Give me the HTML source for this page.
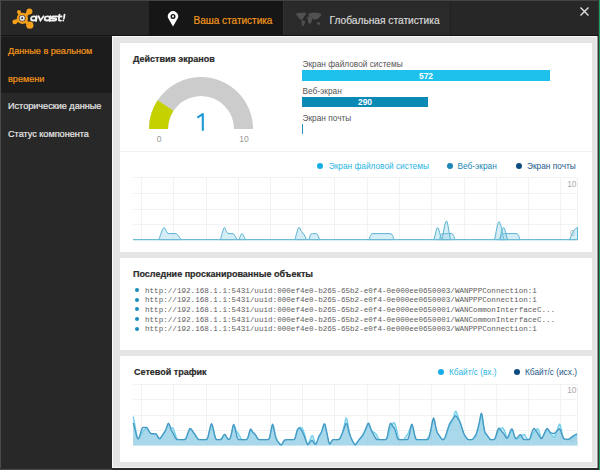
<!DOCTYPE html>
<html><head><meta charset="utf-8">
<style>
html,body{margin:0;padding:0;}
body{width:600px;height:470px;overflow:hidden;position:relative;background:#282828;font-family:"Liberation Sans",sans-serif;}
.a{position:absolute;white-space:nowrap;}
.t{position:absolute;white-space:nowrap;line-height:1;}
.mono{font-family:"Liberation Mono",monospace;}
.w{-webkit-text-stroke:0.2px currentColor;}
</style></head><body>
<div class="a" style="left:0;top:0;width:600px;height:36px;background:#272727"></div>
<div class="a" style="left:149px;top:1px;width:134px;height:34px;background:#161616"></div>
<div class="a" style="left:283px;top:1px;width:1px;height:34px;background:#303030"></div>
<div class="a" style="left:284px;top:1px;width:166px;height:34px;background:#2a2a2a"></div>
<div class="a" style="left:450px;top:1px;width:1px;height:34px;background:#202020"></div>
<div class="a" style="left:0;top:35px;width:600px;height:1px;background:#121212"></div>
<div class="a" style="left:0;top:37px;width:112px;height:56px;background:#1c1c1c"></div>
<div class="t w" style="left:8px;top:47px;font-size:9.1px;color:#f3961a">Данные в реальном</div>
<div class="t w" style="left:8px;top:74.5px;font-size:9.1px;color:#f3961a">времени</div>
<div class="t w" style="left:8px;top:102px;font-size:9.1px;color:#e8e8e8">Исторические данные</div>
<div class="t w" style="left:8px;top:129.5px;font-size:9.1px;color:#e8e8e8">Статус компонента</div>
<div class="t w" style="left:193.5px;top:15.5px;font-size:10px;color:#f3961a">Ваша статистика</div>
<div class="t w" style="left:329.5px;top:15.5px;font-size:10.2px;color:#d8d8d8">Глобальная статистика</div>

<div class="a" style="left:112px;top:36px;width:486px;height:432px;background:#e5e5e5"></div>
<div class="a" style="left:112px;top:36px;width:486px;height:1px;background:#fafafa"></div>
<div class="a" style="left:112px;top:36px;width:1px;height:432px;background:#fafafa"></div>
<div class="a" style="left:120px;top:43px;width:472px;height:209px;background:#fff"></div>
<div class="a" style="left:120px;top:258px;width:472px;height:92px;background:#fff"></div>
<div class="a" style="left:120px;top:356px;width:472px;height:106px;background:#fff"></div>
<div class="a" style="left:120px;top:151px;width:472px;height:1px;background:#f0f0f0"></div>
<div class="a" style="left:0;top:0;width:600px;height:1px;background:#444"></div>
<div class="a" style="left:0;top:0;width:1px;height:470px;background:#4a4a4a"></div>
<div class="a" style="left:112px;top:467px;width:486px;height:1px;background:#f4f4f4"></div>
<div class="a" style="left:596px;top:36px;width:1px;height:432px;background:#eef0f0"></div>
<div class="a" style="left:597px;top:36px;width:1px;height:432px;background:#9a9494"></div>
<div class="a" style="left:0;top:468px;width:598px;height:2px;background:#2a2a2a"></div>
<div class="a" style="left:0;top:469px;width:112px;height:1px;background:#4a4a4a"></div>
<div class="a" style="left:598px;top:0;width:1px;height:470px;background:#3a3333"></div>
<div class="a" style="left:599px;top:0;width:1px;height:470px;background:#14a060"></div>

<div class="t w" style="left:133px;top:55px;font-size:9px;font-weight:bold;color:#2a2a2a">Действия экранов</div>
<div class="t" style="left:302.5px;top:60px;font-size:8.3px;color:#555">Экран файловой системы</div>
<div class="t" style="left:302.5px;top:87px;font-size:8.3px;color:#555">Веб-экран</div>
<div class="t" style="left:302.5px;top:114px;font-size:8.3px;color:#555">Экран почты</div>
<div class="a" style="left:302px;top:70px;width:248px;height:10.5px;background:#1ec0ec"></div>
<div class="a" style="left:302px;top:97px;width:126px;height:10px;background:#0a8ab4"></div>
<div class="a" style="left:302px;top:123.5px;width:1px;height:10px;background:#2a8fc0"></div>
<div class="t" style="left:302px;width:248px;text-align:center;top:71.5px;font-size:8.5px;font-weight:bold;color:#fff">572</div>
<div class="t" style="left:302px;width:126px;text-align:center;top:98px;font-size:8.5px;font-weight:bold;color:#fff">290</div>
<div class="t" style="left:154px;width:10px;text-align:center;top:135px;font-size:8.5px;color:#999">0</div>
<div class="t" style="left:234px;width:20px;text-align:center;top:135px;font-size:8.5px;color:#999">10</div>

<div class="a" style="left:317px;top:162.75px;width:6px;height:6px;border-radius:50%;background:#18ade6"></div>
<div class="t" style="left:328.75px;top:162px;font-size:8.3px;color:#2ab5e2">Экран файловой системы</div>
<div class="a" style="left:446.5px;top:162.75px;width:6px;height:6px;border-radius:50%;background:#1a88b6"></div>
<div class="t" style="left:457.5px;top:162px;font-size:8.3px;color:#1a86b2">Веб-экран</div>
<div class="a" style="left:515.75px;top:162.75px;width:6px;height:6px;border-radius:50%;background:#0b4b80"></div>
<div class="t" style="left:527px;top:162px;font-size:8.3px;color:#22578a">Экран почты</div>
<div class="t" style="left:556.5px;width:20px;text-align:right;top:180px;font-size:8.4px;color:#aaa">10</div>

<div class="t" style="left:570px;top:229px;font-size:8.4px;color:#b5b5b5">0</div>
<div class="t" style="left:570px;top:435px;font-size:8.4px;color:#b5b5b5">0</div>
<div class="t w" style="left:133px;top:270px;font-size:9px;font-weight:bold;color:#2a2a2a">Последние просканированные объекты</div>
<div class="a" style="left:134.5px;top:288px;width:4px;height:4px;border-radius:50%;background:#1b8cc0"></div>
<div class="a" style="left:134.5px;top:297.7px;width:4px;height:4px;border-radius:50%;background:#1b8cc0"></div>
<div class="a" style="left:134.5px;top:307.4px;width:4px;height:4px;border-radius:50%;background:#1b8cc0"></div>
<div class="a" style="left:134.5px;top:317.1px;width:4px;height:4px;border-radius:50%;background:#1b8cc0"></div>
<div class="a" style="left:134.5px;top:326.8px;width:4px;height:4px;border-radius:50%;background:#1b8cc0"></div>
<div class="a mono" style="left:145px;top:286.5px;font-size:7.6px;line-height:9.7px;color:#606060">http://192.168.1.1:5431/uuid:000ef4e0-b265-65b2-e0f4-0e000ee0650003/WANPPPConnection:1<br>http://192.168.1.1:5431/uuid:000ef4e0-b265-65b2-e0f4-0e000ee0650003/WANPPPConnection:1<br>http://192.168.1.1:5431/uuid:000ef4e0-b265-65b2-e0f4-0e000ee0650001/WANCommonInterfaceC...<br>http://192.168.1.1:5431/uuid:000ef4e0-b265-65b2-e0f4-0e000ee0650001/WANCommonInterfaceC...<br>http://192.168.1.1:5431/uuid:000ef4e0-b265-65b2-e0f4-0e000ee0650003/WANPPPConnection:1</div>

<div class="t w" style="left:134px;top:368px;font-size:9px;font-weight:bold;color:#2a2a2a">Сетевой трафик</div>
<div class="a" style="left:437.5px;top:368.5px;width:6px;height:6px;border-radius:50%;background:#18ade6"></div>
<div class="t" style="left:449px;top:368px;font-size:8.3px;color:#2ab5e2">Кбайт/с (вх.)</div>
<div class="a" style="left:513.5px;top:368.5px;width:6px;height:6px;border-radius:50%;background:#0b4b80"></div>
<div class="t" style="left:525px;top:368px;font-size:8.3px;color:#22578a">Кбайт/с (исх.)</div>
<div class="t" style="left:556.5px;width:20px;text-align:right;top:386px;font-size:8.4px;color:#aaa">10</div>

<svg class="a" style="left:0;top:0" width="600" height="470" viewBox="0 0 600 470">
<g fill="#f5a01a">
<path d="M22.5,18.5 L18.9,11.9 M22.5,18.5 L29.4,11.6 M22.5,18.5 L14.8,21.8 M22.5,18.5 L29.6,25.1" stroke="#f5a01a" stroke-width="3.2"/>
<circle cx="22.4" cy="18.4" r="5.6"/>
<circle cx="18.9" cy="11.9" r="1.9"/>
<circle cx="29.4" cy="11.4" r="3"/>
<circle cx="14.8" cy="21.9" r="2.4"/>
<circle cx="29.8" cy="25.2" r="3.6"/>
</g>
<circle cx="22.2" cy="18.2" r="3.3" fill="#4a3420"/>
<circle cx="22.2" cy="18.2" r="2.6" fill="#dfe4ea"/>
<circle cx="22.2" cy="18.2" r="0.9" fill="#222"/>
<g fill="none" stroke="#f2f2f2" stroke-width="1.8" stroke-linecap="round" transform="translate(0,21) skewX(-8) translate(0,-21)">
<ellipse cx="33.3" cy="18.45" rx="2.55" ry="2.05"/>
<path d="M36.1,16.2 V21"/>
<path d="M37.9,16.3 L40.4,20.5 L42.9,16.3"/>
<ellipse cx="46.9" cy="18.45" rx="2.55" ry="2.05"/>
<path d="M49.7,16.2 V21"/>
<path d="M56,16.4 H52.4 Q51.1,16.4 51.1,17.5 Q51.1,18.5 52.4,18.5 H54.8 Q56.1,18.5 56.1,19.6 Q56.1,20.6 54.8,20.6 H51"/>
<path d="M58.6,14.6 V19.4 Q58.6,20.6 59.8,20.6 H61"/>
<path d="M57.3,16.5 H61"/>
<path d="M63.6,14.6 V18.6"/>
</g>
<circle cx="63.3" cy="20.5" r="0.9" fill="#f2f2f2"/>
<g fill="#515151" stroke="#515151" stroke-width="1.2" stroke-linejoin="round">
<path d="M296.5,14 L299.5,13.3 L302.5,13.6 L304.5,12.8 L305.5,13.8 L304,15.6 L303,17.6 L301.8,19 L300.5,19.2 L299.2,17.6 L298,16 Z"/>
<path d="M302,21 L303.8,21.2 L304.6,22.2 L303.6,24.3 L302.6,25.5 L302.3,23.5 Z"/>
<path d="M309,14 L312,13.4 L316,13.3 L319.5,13.8 L320.8,14.8 L319.2,16.5 L317.6,18.3 L315.8,19 L313.2,18.6 L311.8,17 L309.6,16.3 Z"/>
<path d="M307.8,17.3 L310.4,17 L311.6,18.8 L311.2,21.3 L309.9,23.3 L309,22.8 L308.4,20.3 Z"/>
<path d="M317.5,23 L319.4,22.9 L319.7,24 L317.8,24.1 Z"/>
</g>
<path d="M149,129 A52,52 0 0 1 253,129 L234,129 A33,33 0 0 0 168,129 Z" fill="#cccccc"/><path d="M149,129 A52,52 0 0 1 157.64,100.30 L173.48,110.79 A33,33 0 0 0 168,129 Z" fill="#c5d200"/><path d="M202.8,113.2 V130.7 M203.2,113.8 L197.3,117.6" stroke="#1e9bd7" stroke-width="2.1" fill="none"/>
<g stroke="#f2f2f2" stroke-width="1"><line x1="133" y1="177.5" x2="577.5" y2="177.5"/><line x1="133" y1="193.5" x2="577.5" y2="193.5"/><line x1="133" y1="209.5" x2="577.5" y2="209.5"/><line x1="133" y1="224.5" x2="577.5" y2="224.5"/><line x1="141.5" y1="177" x2="141.5" y2="239.6"/><line x1="173.5" y1="177" x2="173.5" y2="239.6"/><line x1="206.5" y1="177" x2="206.5" y2="239.6"/><line x1="238.5" y1="177" x2="238.5" y2="239.6"/><line x1="270.5" y1="177" x2="270.5" y2="239.6"/><line x1="302.5" y1="177" x2="302.5" y2="239.6"/><line x1="334.5" y1="177" x2="334.5" y2="239.6"/><line x1="367.5" y1="177" x2="367.5" y2="239.6"/><line x1="399.5" y1="177" x2="399.5" y2="239.6"/><line x1="431.5" y1="177" x2="431.5" y2="239.6"/><line x1="464.5" y1="177" x2="464.5" y2="239.6"/><line x1="496.5" y1="177" x2="496.5" y2="239.6"/><line x1="528.5" y1="177" x2="528.5" y2="239.6"/><line x1="560.5" y1="177" x2="560.5" y2="239.6"/><line x1="577.5" y1="177" x2="577.5" y2="239.6"/></g>
<path d="M159.00,239.60 C159.83,237.07 160.67,233.95 161.50,232.00 C162.47,229.74 163.43,227.60 164.40,227.60 C165.27,227.60 166.13,231.55 167.00,232.50 C167.67,233.23 168.33,233.60 169.00,233.60 C171.33,233.60 173.67,233.60 176.00,233.60 C176.83,233.60 177.67,235.00 178.50,236.00 C179.33,237.00 180.17,238.40 181.00,239.60 Z" fill="rgba(150,210,230,0.4)" stroke="#5ab4d2" stroke-width="1"/><path d="M220.50,239.60 C221.17,237.07 221.83,234.03 222.50,232.00 C223.13,230.08 223.77,227.60 224.40,227.60 C225.27,227.60 226.13,231.55 227.00,232.50 C227.67,233.23 228.33,233.60 229.00,233.60 C230.33,233.60 231.67,233.60 233.00,233.60 C233.67,233.60 234.33,235.00 235.00,236.00 C235.67,237.00 236.33,238.40 237.00,239.60 Z" fill="rgba(150,210,230,0.4)" stroke="#5ab4d2" stroke-width="1"/><path d="M239.00,239.60 C240.00,237.60 241.00,233.60 242.00,233.60 C243.17,233.60 244.33,237.60 245.50,239.60 Z" fill="rgba(150,210,230,0.4)" stroke="#5ab4d2" stroke-width="1"/><path d="M295.00,239.60 C295.67,237.07 296.33,234.03 297.00,232.00 C297.67,229.97 298.33,227.40 299.00,227.40 C299.83,227.40 300.67,230.32 301.50,231.50 C302.33,232.68 303.17,233.15 304.00,234.50 C304.83,235.85 305.67,237.90 306.50,239.60 Z" fill="rgba(150,210,230,0.4)" stroke="#5ab4d2" stroke-width="1"/><path d="M309.00,239.60 C309.67,237.73 310.33,234.36 311.00,234.00 C311.50,233.73 312.00,233.60 312.50,233.60 C313.50,233.60 314.50,233.60 315.50,233.60 C316.00,233.60 316.50,233.73 317.00,234.00 C317.83,234.44 318.67,237.73 319.50,239.60 Z" fill="rgba(150,210,230,0.4)" stroke="#5ab4d2" stroke-width="1"/><path d="M369.00,239.60 C369.67,237.90 370.33,235.10 371.00,234.50 C371.67,233.90 372.33,233.60 373.00,233.60 C378.67,233.60 384.33,233.60 390.00,233.60 C390.67,233.60 391.33,233.90 392.00,234.50 C392.67,235.10 393.33,237.90 394.00,239.60 Z" fill="rgba(150,210,230,0.4)" stroke="#5ab4d2" stroke-width="1"/><path d="M439.50,239.60 C440.00,237.90 440.50,234.95 441.00,234.50 C441.67,233.90 442.33,233.60 443.00,233.60 C445.67,233.60 448.33,233.60 451.00,233.60 C451.67,233.60 452.33,233.90 453.00,234.50 C453.67,235.10 454.33,237.90 455.00,239.60 Z" fill="rgba(150,210,230,0.4)" stroke="#5ab4d2" stroke-width="1"/><path d="M434.00,239.60 C435.20,235.60 436.40,227.60 437.60,227.60 C438.90,227.60 440.20,235.60 441.50,239.60 Z" fill="rgba(150,210,230,0.4)" stroke="#5ab4d2" stroke-width="1"/><path d="M442.00,239.60 C443.47,233.40 444.93,221.00 446.40,221.00 C447.77,221.00 449.13,233.40 450.50,239.60 Z" fill="rgba(150,210,230,0.4)" stroke="#5ab4d2" stroke-width="1"/><path d="M500.00,239.60 C500.67,237.90 501.33,235.10 502.00,234.50 C502.67,233.90 503.33,233.60 504.00,233.60 C508.00,233.60 512.00,233.60 516.00,233.60 C516.67,233.60 517.33,233.90 518.00,234.50 C518.67,235.10 519.33,237.90 520.00,239.60 Z" fill="rgba(150,210,230,0.4)" stroke="#5ab4d2" stroke-width="1"/><path d="M494.50,239.60 C496.00,233.60 497.50,221.60 499.00,221.60 C500.67,221.60 502.33,233.60 504.00,239.60 Z" fill="rgba(150,210,230,0.4)" stroke="#5ab4d2" stroke-width="1"/><path d="M499.50,239.60 C500.87,235.60 502.23,227.60 503.60,227.60 C504.90,227.60 506.20,235.60 507.50,239.60 Z" fill="rgba(150,210,230,0.4)" stroke="#5ab4d2" stroke-width="1"/><path d="M569.50,239.60 C570.33,237.73 571.17,235.63 572.00,234.00 C573.17,231.71 574.33,229.50 575.50,228.50 C576.17,227.93 576.83,227.90 577.50,227.60 L577.5,239.6 Z" fill="rgba(150,210,230,0.4)" stroke="#5ab4d2" stroke-width="1"/>
<line x1="133" y1="239.6" x2="577.5" y2="239.6" stroke="#6cbad6" stroke-width="1.3"/>
<g stroke="#f2f2f2" stroke-width="1"><line x1="133" y1="384.5" x2="577.5" y2="384.5"/><line x1="133" y1="399.5" x2="577.5" y2="399.5"/><line x1="133" y1="415.5" x2="577.5" y2="415.5"/><line x1="133" y1="430.5" x2="577.5" y2="430.5"/><line x1="141.5" y1="384" x2="141.5" y2="445.6"/><line x1="173.5" y1="384" x2="173.5" y2="445.6"/><line x1="206.5" y1="384" x2="206.5" y2="445.6"/><line x1="238.5" y1="384" x2="238.5" y2="445.6"/><line x1="270.5" y1="384" x2="270.5" y2="445.6"/><line x1="302.5" y1="384" x2="302.5" y2="445.6"/><line x1="334.5" y1="384" x2="334.5" y2="445.6"/><line x1="367.5" y1="384" x2="367.5" y2="445.6"/><line x1="399.5" y1="384" x2="399.5" y2="445.6"/><line x1="431.5" y1="384" x2="431.5" y2="445.6"/><line x1="464.5" y1="384" x2="464.5" y2="445.6"/><line x1="496.5" y1="384" x2="496.5" y2="445.6"/><line x1="528.5" y1="384" x2="528.5" y2="445.6"/><line x1="560.5" y1="384" x2="560.5" y2="445.6"/><line x1="577.5" y1="384" x2="577.5" y2="445.6"/></g>
<path d="M133.1,416.5 L133.6,418.3 L134.1,420.7 L134.6,423.3 L135.1,426.1 L135.6,428.9 L136.1,431.6 L136.6,434.2 L137.1,436.5 L137.6,438.1 L138.1,438.8 L138.6,438.7 L139.1,438.1 L139.6,437.1 L140.1,436.1 L140.6,435.2 L141.1,434.5 L141.6,433.7 L142.1,433.0 L142.6,432.3 L143.1,431.6 L143.6,430.9 L144.1,430.2 L144.6,429.5 L145.1,428.8 L145.6,428.3 L146.1,427.9 L146.6,427.8 L147.1,428.1 L147.6,428.8 L148.1,429.6 L148.6,430.5 L149.1,431.4 L149.6,432.2 L150.1,432.9 L150.6,433.4 L151.1,433.6 L151.6,433.7 L152.1,433.7 L152.6,433.7 L153.1,433.7 L153.6,433.7 L154.1,433.7 L154.6,433.8 L155.1,433.8 L155.6,433.9 L156.1,434.1 L156.6,434.7 L157.1,435.4 L157.6,436.3 L158.1,437.2 L158.6,438.0 L159.1,438.6 L159.6,438.8 L160.1,438.6 L160.6,438.2 L161.1,437.6 L161.6,437.0 L162.1,436.4 L162.6,435.7 L163.1,435.0 L163.6,434.2 L164.1,433.4 L164.6,432.6 L165.1,431.7 L165.6,430.7 L166.1,429.5 L166.6,428.2 L167.1,426.9 L167.6,425.6 L168.1,424.7 L168.6,424.4 L169.1,424.7 L169.6,425.5 L170.1,426.5 L170.6,427.4 L171.1,428.0 L171.6,428.2 L172.1,428.0 L172.6,428.0 L173.1,428.3 L173.6,429.3 L174.1,430.6 L174.6,432.2 L175.1,433.8 L175.6,435.3 L176.1,436.7 L176.6,437.8 L177.1,438.7 L177.6,439.2 L178.1,439.5 L178.6,439.6 L179.1,439.6 L179.6,439.6 L180.1,439.6 L180.6,439.6 L181.1,439.6 L181.6,439.6 L182.1,439.6 L182.6,439.6 L183.1,439.6 L183.6,439.6 L184.1,439.6 L184.6,439.5 L185.1,439.4 L185.6,438.9 L186.1,438.1 L186.6,436.9 L187.1,435.6 L187.6,434.3 L188.1,433.0 L188.6,431.7 L189.1,430.5 L189.6,429.5 L190.1,429.0 L190.6,429.1 L191.1,429.5 L191.6,430.1 L192.1,430.8 L192.6,431.5 L193.1,432.1 L193.6,432.8 L194.1,433.5 L194.6,434.2 L195.1,434.9 L195.6,435.6 L196.1,436.4 L196.6,437.1 L197.1,437.9 L197.6,438.6 L198.1,439.1 L198.6,439.4 L199.1,439.6 L199.6,439.6 L200.1,439.6 L200.6,439.6 L201.1,439.6 L201.6,439.6 L202.1,439.6 L202.6,439.6 L203.1,439.6 L203.6,439.6 L204.1,439.6 L204.6,439.6 L205.1,439.6 L205.6,439.6 L206.1,439.6 L206.6,439.5 L207.1,439.0 L207.6,438.1 L208.1,436.6 L208.6,434.7 L209.1,432.7 L209.6,430.6 L210.1,428.6 L210.6,426.9 L211.1,425.6 L211.6,425.2 L212.1,425.9 L212.6,427.3 L213.1,429.1 L213.6,431.0 L214.1,433.0 L214.6,435.0 L215.1,436.9 L215.6,438.4 L216.1,439.2 L216.6,439.5 L217.1,439.6 L217.6,439.6 L218.1,439.6 L218.6,439.6 L219.1,439.6 L219.6,439.6 L220.1,439.6 L220.6,439.5 L221.1,439.2 L221.6,438.8 L222.1,438.1 L222.6,437.3 L223.1,436.5 L223.6,435.7 L224.1,435.1 L224.6,434.9 L225.1,435.1 L225.6,435.7 L226.1,436.4 L226.6,437.2 L227.1,438.0 L227.6,438.7 L228.1,439.2 L228.6,439.4 L229.1,439.5 L229.6,439.2 L230.1,438.4 L230.6,437.2 L231.1,435.6 L231.6,433.6 L232.1,431.3 L232.6,428.8 L233.1,426.6 L233.6,425.4 L234.1,425.4 L234.6,426.3 L235.1,427.6 L235.6,429.0 L236.1,430.2 L236.6,431.1 L237.1,431.9 L237.6,432.5 L238.1,433.1 L238.6,433.8 L239.1,434.7 L239.6,435.8 L240.1,436.9 L240.6,437.9 L241.1,438.8 L241.6,439.3 L242.1,439.5 L242.6,439.6 L243.1,439.6 L243.6,439.6 L244.1,439.6 L244.6,439.6 L245.1,439.6 L245.6,439.6 L246.1,439.6 L246.6,439.5 L247.1,439.2 L247.6,438.5 L248.1,437.3 L248.6,435.8 L249.1,434.1 L249.6,432.5 L250.1,431.2 L250.6,430.4 L251.1,430.4 L251.6,430.9 L252.1,431.6 L252.6,432.3 L253.1,432.8 L253.6,433.1 L254.1,433.5 L254.6,433.9 L255.1,434.5 L255.6,435.2 L256.1,436.0 L256.6,436.9 L257.1,437.8 L257.6,438.5 L258.1,439.1 L258.6,439.4 L259.1,439.6 L259.6,439.6 L260.1,439.6 L260.6,439.6 L261.1,439.6 L261.6,439.6 L262.1,439.6 L262.6,439.6 L263.1,439.6 L263.6,439.6 L264.1,439.6 L264.6,439.6 L265.1,439.6 L265.6,439.6 L266.1,439.6 L266.6,439.6 L267.1,439.6 L267.6,439.6 L268.1,439.6 L268.6,439.4 L269.1,438.8 L269.6,437.6 L270.1,435.7 L270.6,433.3 L271.1,430.8 L271.6,428.4 L272.1,426.5 L272.6,425.7 L273.1,426.3 L273.6,428.0 L274.1,430.3 L274.6,432.6 L275.1,434.8 L275.6,436.7 L276.1,438.2 L276.6,439.4 L277.1,440.4 L277.6,441.2 L278.1,441.9 L278.6,442.5 L279.1,443.1 L279.6,443.7 L280.1,444.2 L280.6,444.6 L281.1,444.8 L281.6,444.6 L282.1,444.0 L282.6,443.2 L283.1,442.3 L283.6,441.5 L284.1,440.8 L284.6,440.3 L285.1,439.9 L285.6,439.8 L286.1,439.7 L286.6,439.6 L287.1,439.6 L287.6,439.6 L288.1,439.6 L288.6,439.6 L289.1,439.6 L289.6,439.6 L290.1,439.6 L290.6,439.6 L291.1,439.6 L291.6,439.6 L292.1,439.6 L292.6,439.6 L293.1,439.6 L293.6,439.6 L294.1,439.5 L294.6,439.1 L295.1,438.3 L295.6,437.1 L296.1,435.4 L296.6,433.7 L297.1,432.2 L297.6,431.0 L298.1,430.0 L298.6,429.0 L299.1,428.2 L299.6,427.7 L300.1,427.4 L300.6,427.3 L301.1,427.4 L301.6,427.6 L302.1,428.2 L302.6,429.0 L303.1,430.1 L303.6,431.2 L304.1,432.6 L304.6,434.2 L305.1,436.0 L305.6,437.9 L306.1,439.9 L306.6,441.7 L307.1,443.2 L307.6,443.9 L308.1,443.7 L308.6,442.9 L309.1,441.8 L309.6,440.6 L310.1,439.4 L310.6,438.3 L311.1,437.1 L311.6,436.1 L312.1,435.5 L312.6,435.6 L313.1,436.5 L313.6,438.1 L314.1,439.9 L314.6,441.7 L315.1,443.1 L315.6,443.9 L316.1,443.8 L316.6,443.0 L317.1,441.8 L317.6,440.5 L318.1,439.3 L318.6,438.1 L319.1,437.0 L319.6,436.1 L320.1,435.3 L320.6,434.6 L321.1,433.7 L321.6,432.5 L322.1,431.1 L322.6,429.6 L323.1,427.9 L323.6,426.4 L324.1,425.3 L324.6,425.1 L325.1,426.0 L325.6,427.7 L326.1,429.9 L326.6,432.1 L327.1,434.5 L327.6,436.8 L328.1,439.2 L328.6,441.4 L329.1,443.0 L329.6,443.9 L330.1,443.8 L330.6,443.2 L331.1,442.3 L331.6,441.4 L332.1,440.6 L332.6,440.0 L333.1,439.7 L333.6,439.6 L334.1,439.6 L334.6,439.6 L335.1,439.6 L335.6,439.6 L336.1,439.6 L336.6,439.6 L337.1,439.6 L337.6,439.6 L338.1,439.6 L338.6,439.5 L339.1,439.3 L339.6,438.8 L340.1,438.0 L340.6,437.0 L341.1,436.0 L341.6,434.8 L342.1,433.6 L342.6,432.0 L343.1,430.1 L343.6,428.0 L344.1,425.8 L344.6,423.6 L345.1,421.4 L345.6,419.4 L346.1,418.1 L346.6,418.2 L347.1,419.7 L347.6,422.3 L348.1,425.3 L348.6,428.4 L349.1,431.2 L349.6,433.5 L350.1,435.3 L350.6,436.7 L351.1,438.0 L351.6,439.1 L352.1,440.2 L352.6,441.1 L353.1,442.0 L353.6,442.8 L354.1,443.6 L354.6,444.3 L355.1,444.7 L355.6,444.6 L356.1,444.1 L356.6,443.4 L357.1,442.6 L357.6,441.9 L358.1,441.1 L358.6,440.4 L359.1,439.8 L359.6,439.4 L360.1,438.9 L360.6,438.5 L361.1,438.1 L361.6,437.7 L362.1,437.2 L362.6,436.5 L363.1,435.7 L363.6,434.8 L364.1,433.8 L364.6,432.7 L365.1,431.6 L365.6,430.4 L366.1,429.2 L366.6,427.9 L367.1,426.6 L367.6,425.5 L368.1,424.7 L368.6,424.5 L369.1,425.1 L369.6,426.1 L370.1,427.4 L370.6,428.7 L371.1,429.7 L371.6,430.5 L372.1,431.1 L372.6,431.4 L373.1,431.8 L373.6,432.1 L374.1,432.4 L374.6,432.7 L375.1,433.0 L375.6,433.5 L376.1,434.0 L376.6,434.8 L377.1,435.8 L377.6,436.9 L378.1,437.9 L378.6,438.8 L379.1,439.3 L379.6,439.5 L380.1,439.6 L380.6,439.6 L381.1,439.6 L381.6,439.6 L382.1,439.6 L382.6,439.6 L383.1,439.6 L383.6,439.6 L384.1,439.6 L384.6,439.6 L385.1,439.6 L385.6,439.6 L386.1,439.5 L386.6,439.1 L387.1,438.4 L387.6,437.2 L388.1,435.8 L388.6,434.2 L389.1,432.6 L389.6,430.9 L390.1,429.2 L390.6,427.7 L391.1,426.4 L391.6,425.4 L392.1,424.6 L392.6,423.9 L393.1,423.3 L393.6,422.8 L394.1,422.6 L394.6,423.1 L395.1,424.2 L395.6,425.6 L396.1,427.3 L396.6,429.1 L397.1,431.1 L397.6,433.5 L398.1,435.9 L398.6,437.9 L399.1,439.0 L399.6,439.5 L400.1,439.6 L400.6,439.6 L401.1,439.6 L401.6,439.6 L402.1,439.6 L402.6,439.6 L403.1,439.5 L403.6,439.3 L404.1,438.9 L404.6,438.3 L405.1,437.6 L405.6,436.9 L406.1,436.2 L406.6,435.5 L407.1,434.9 L407.6,434.1 L408.1,433.3 L408.6,432.3 L409.1,431.1 L409.6,429.7 L410.1,428.3 L410.6,426.9 L411.1,425.7 L411.6,425.1 L412.1,425.3 L412.6,426.6 L413.1,428.5 L413.6,430.6 L414.1,432.9 L414.6,435.0 L415.1,437.0 L415.6,438.4 L416.1,439.2 L416.6,439.5 L417.1,439.6 L417.6,439.6 L418.1,439.6 L418.6,439.6 L419.1,439.6 L419.6,439.6 L420.1,439.6 L420.6,439.6 L421.1,439.6 L421.6,439.6 L422.1,439.6 L422.6,439.6 L423.1,439.6 L423.6,439.6 L424.1,439.6 L424.6,439.6 L425.1,439.6 L425.6,439.6 L426.1,439.5 L426.6,439.4 L427.1,439.0 L427.6,438.3 L428.1,437.4 L428.6,436.5 L429.1,435.4 L429.6,434.2 L430.1,432.9 L430.6,431.3 L431.1,429.4 L431.6,427.1 L432.1,424.8 L432.6,422.6 L433.1,421.1 L433.6,420.5 L434.1,421.2 L434.6,422.8 L435.1,424.8 L435.6,426.9 L436.1,429.0 L436.6,430.8 L437.1,432.2 L437.6,433.3 L438.1,434.2 L438.6,435.0 L439.1,435.7 L439.6,436.4 L440.1,437.1 L440.6,437.8 L441.1,438.4 L441.6,439.0 L442.1,439.3 L442.6,439.5 L443.1,439.6 L443.6,439.5 L444.1,439.2 L444.6,438.7 L445.1,437.9 L445.6,436.8 L446.1,435.5 L446.6,434.2 L447.1,432.8 L447.6,431.3 L448.1,429.8 L448.6,428.4 L449.1,427.1 L449.6,425.9 L450.1,425.0 L450.6,424.1 L451.1,423.2 L451.6,422.4 L452.1,421.4 L452.6,420.1 L453.1,418.6 L453.6,416.9 L454.1,415.0 L454.6,413.3 L455.1,411.8 L455.6,411.2 L456.1,411.4 L456.6,412.4 L457.1,413.7 L457.6,415.1 L458.1,416.5 L458.6,417.9 L459.1,419.4 L459.6,420.8 L460.1,422.3 L460.6,423.8 L461.1,425.4 L461.6,427.0 L462.1,428.5 L462.6,430.1 L463.1,431.6 L463.6,432.9 L464.1,434.1 L464.6,435.0 L465.1,435.8 L465.6,436.6 L466.1,437.4 L466.6,438.1 L467.1,438.8 L467.6,439.2 L468.1,439.5 L468.6,439.6 L469.1,439.6 L469.6,439.6 L470.1,439.6 L470.6,439.6 L471.1,439.6 L471.6,439.6 L472.1,439.5 L472.6,439.3 L473.1,439.0 L473.6,438.5 L474.1,438.1 L474.6,437.6 L475.1,437.1 L475.6,436.5 L476.1,435.6 L476.6,434.4 L477.1,432.9 L477.6,431.3 L478.1,429.5 L478.6,427.7 L479.1,425.6 L479.6,423.2 L480.1,420.6 L480.6,418.0 L481.1,416.1 L481.6,415.8 L482.1,417.3 L482.6,420.2 L483.1,423.6 L483.6,426.9 L484.1,429.8 L484.6,432.0 L485.1,433.3 L485.6,434.1 L486.1,434.6 L486.6,435.1 L487.1,435.7 L487.6,436.3 L488.1,436.9 L488.6,437.6 L489.1,438.3 L489.6,438.8 L490.1,439.3 L490.6,439.5 L491.1,439.6 L491.6,439.6 L492.1,439.6 L492.6,439.6 L493.1,439.6 L493.6,439.6 L494.1,439.5 L494.6,439.3 L495.1,438.7 L495.6,437.8 L496.1,436.7 L496.6,435.4 L497.1,434.2 L497.6,433.1 L498.1,432.1 L498.6,431.3 L499.1,430.5 L499.6,429.8 L500.1,429.1 L500.6,428.6 L501.1,428.3 L501.6,428.0 L502.1,427.8 L502.6,427.9 L503.1,428.3 L503.6,429.0 L504.1,429.8 L504.6,430.9 L505.1,432.3 L505.6,433.7 L506.1,435.2 L506.6,436.6 L507.1,437.7 L507.6,438.1 L508.1,437.7 L508.6,436.9 L509.1,435.7 L509.6,434.5 L510.1,433.3 L510.6,432.2 L511.1,431.2 L511.6,430.6 L512.1,430.6 L512.6,431.3 L513.1,432.5 L513.6,433.9 L514.1,435.3 L514.6,436.7 L515.1,437.9 L515.6,438.7 L516.1,439.0 L516.6,439.0 L517.1,438.8 L517.6,438.6 L518.1,438.3 L518.6,438.0 L519.1,437.8 L519.6,437.5 L520.1,437.2 L520.6,436.9 L521.1,436.5 L521.6,436.1 L522.1,435.7 L522.6,435.3 L523.1,434.9 L523.6,434.6 L524.1,434.4 L524.6,434.7 L525.1,435.2 L525.6,436.0 L526.1,437.0 L526.6,437.8 L527.1,438.6 L527.6,439.2 L528.1,439.5 L528.6,439.6 L529.1,439.5 L529.6,439.3 L530.1,438.9 L530.6,438.1 L531.1,437.1 L531.6,436.1 L532.1,435.0 L532.6,434.0 L533.1,433.2 L533.6,432.5 L534.1,431.9 L534.6,431.4 L535.1,430.9 L535.6,430.4 L536.1,429.9 L536.6,429.4 L537.1,428.9 L537.6,428.7 L538.1,428.9 L538.6,429.8 L539.1,431.1 L539.6,432.8 L540.1,434.5 L540.6,436.2 L541.1,437.5 L541.6,438.1 L542.1,438.0 L542.6,437.4 L543.1,436.5 L543.6,435.6 L544.1,434.6 L544.6,433.6 L545.1,432.7 L545.6,431.7 L546.1,430.8 L546.6,430.2 L547.1,429.9 L547.6,430.1 L548.1,430.6 L548.6,431.3 L549.1,432.0 L549.6,432.7 L550.1,433.4 L550.6,434.0 L551.1,434.6 L551.6,435.1 L552.1,435.7 L552.6,436.2 L553.1,436.7 L553.6,437.2 L554.1,437.4 L554.6,437.2 L555.1,436.4 L555.6,435.1 L556.1,433.6 L556.6,432.0 L557.1,430.4 L557.6,428.8 L558.1,427.3 L558.6,425.8 L559.1,424.6 L559.6,424.1 L560.1,424.6 L560.6,426.2 L561.1,428.3 L561.6,430.7 L562.1,433.1 L562.6,435.3 L563.1,437.1 L563.6,438.3 L564.1,438.9 L564.6,439.1 L565.1,439.2 L565.6,439.3 L566.1,439.3 L566.6,439.4 L567.1,439.4 L567.6,439.5 L568.1,439.5 L568.6,439.4 L569.1,439.2 L569.6,439.0 L570.1,438.7 L570.6,438.4 L571.1,438.1 L571.6,437.8 L572.1,437.6 L572.6,437.3 L573.1,437.0 L573.6,436.7 L574.1,436.4 L574.6,436.2 L575.1,436.0 L575.6,435.8 L576.1,435.6 L576.6,435.4 L577.1,435.3 L577.5,445.6 L133.1,445.6 Z" fill="rgba(150,210,232,0.5)"/>
<path d="M133.1,423.0 L133.6,424.2 L134.1,426.0 L134.6,427.9 L135.1,429.9 L135.6,431.8 L136.1,433.8 L136.6,435.7 L137.1,437.3 L137.6,438.4 L138.1,438.9 L138.6,438.6 L139.1,437.6 L139.6,436.2 L140.1,434.5 L140.6,432.7 L141.1,431.0 L141.6,429.5 L142.1,428.4 L142.6,427.7 L143.1,427.4 L143.6,427.3 L144.1,427.3 L144.6,427.3 L145.1,427.3 L145.6,427.3 L146.1,427.4 L146.6,427.6 L147.1,428.0 L147.6,428.7 L148.1,429.6 L148.6,430.5 L149.1,431.4 L149.6,432.2 L150.1,432.9 L150.6,433.4 L151.1,433.6 L151.6,433.7 L152.1,433.7 L152.6,433.7 L153.1,433.7 L153.6,433.7 L154.1,433.7 L154.6,433.8 L155.1,433.8 L155.6,433.9 L156.1,434.1 L156.6,434.7 L157.1,435.4 L157.6,436.3 L158.1,437.2 L158.6,438.0 L159.1,438.5 L159.6,438.7 L160.1,438.4 L160.6,437.8 L161.1,437.1 L161.6,436.3 L162.1,435.6 L162.6,434.9 L163.1,434.2 L163.6,433.4 L164.1,432.7 L164.6,432.0 L165.1,431.2 L165.6,430.1 L166.1,428.9 L166.6,427.4 L167.1,425.9 L167.6,424.5 L168.1,423.5 L168.6,423.3 L169.1,424.0 L169.6,425.2 L170.1,426.8 L170.6,428.3 L171.1,429.7 L171.6,430.8 L172.1,431.7 L172.6,432.5 L173.1,433.4 L173.6,434.3 L174.1,435.2 L174.6,436.2 L175.1,437.2 L175.6,438.1 L176.1,438.9 L176.6,439.3 L177.1,439.5 L177.6,439.6 L178.1,439.6 L178.6,439.6 L179.1,439.6 L179.6,439.6 L180.1,439.6 L180.6,439.6 L181.1,439.6 L181.6,439.6 L182.1,439.6 L182.6,439.6 L183.1,439.6 L183.6,439.6 L184.1,439.6 L184.6,439.5 L185.1,439.4 L185.6,438.9 L186.1,438.0 L186.6,436.7 L187.1,435.4 L187.6,434.0 L188.1,432.6 L188.6,431.2 L189.1,429.9 L189.6,428.9 L190.1,428.4 L190.6,428.5 L191.1,429.0 L191.6,429.7 L192.1,430.5 L192.6,431.2 L193.1,432.0 L193.6,432.7 L194.1,433.5 L194.6,434.2 L195.1,434.9 L195.6,435.6 L196.1,436.4 L196.6,437.1 L197.1,437.9 L197.6,438.6 L198.1,439.1 L198.6,439.4 L199.1,439.6 L199.6,439.6 L200.1,439.6 L200.6,439.6 L201.1,439.6 L201.6,439.6 L202.1,439.6 L202.6,439.6 L203.1,439.6 L203.6,439.6 L204.1,439.6 L204.6,439.6 L205.1,439.6 L205.6,439.6 L206.1,439.6 L206.6,439.4 L207.1,439.0 L207.6,438.1 L208.1,436.5 L208.6,434.4 L209.1,432.2 L209.6,430.0 L210.1,427.8 L210.6,425.8 L211.1,424.4 L211.6,423.9 L212.1,424.7 L212.6,426.3 L213.1,428.3 L213.6,430.4 L214.1,432.6 L214.6,434.8 L215.1,436.8 L215.6,438.3 L216.1,439.2 L216.6,439.5 L217.1,439.6 L217.6,439.6 L218.1,439.6 L218.6,439.6 L219.1,439.6 L219.6,439.6 L220.1,439.6 L220.6,439.5 L221.1,439.2 L221.6,438.7 L222.1,438.0 L222.6,437.1 L223.1,436.2 L223.6,435.4 L224.1,434.7 L224.6,434.4 L225.1,434.7 L225.6,435.3 L226.1,436.1 L226.6,437.0 L227.1,437.8 L227.6,438.6 L228.1,439.1 L228.6,439.4 L229.1,439.4 L229.6,439.1 L230.1,438.3 L230.6,436.9 L231.1,435.0 L231.6,432.8 L232.1,430.3 L232.6,427.6 L233.1,425.4 L233.6,424.5 L234.1,425.0 L234.6,426.6 L235.1,428.7 L235.6,430.9 L236.1,433.1 L236.6,435.3 L237.1,437.2 L237.6,438.5 L238.1,439.3 L238.6,439.5 L239.1,439.6 L239.6,439.6 L240.1,439.6 L240.6,439.6 L241.1,439.6 L241.6,439.6 L242.1,439.6 L242.6,439.6 L243.1,439.6 L243.6,439.6 L244.1,439.6 L244.6,439.6 L245.1,439.6 L245.6,439.6 L246.1,439.6 L246.6,439.5 L247.1,439.1 L247.6,438.3 L248.1,436.9 L248.6,435.2 L249.1,433.2 L249.6,431.4 L250.1,429.8 L250.6,429.0 L251.1,429.2 L251.6,430.1 L252.1,431.1 L252.6,432.0 L253.1,432.6 L253.6,433.0 L254.1,433.3 L254.6,433.7 L255.1,434.3 L255.6,435.0 L256.1,435.8 L256.6,436.8 L257.1,437.7 L257.6,438.5 L258.1,439.1 L258.6,439.4 L259.1,439.6 L259.6,439.6 L260.1,439.6 L260.6,439.6 L261.1,439.6 L261.6,439.6 L262.1,439.6 L262.6,439.6 L263.1,439.6 L263.6,439.6 L264.1,439.6 L264.6,439.6 L265.1,439.6 L265.6,439.6 L266.1,439.6 L266.6,439.6 L267.1,439.6 L267.6,439.6 L268.1,439.5 L268.6,439.3 L269.1,438.7 L269.6,437.4 L270.1,435.3 L270.6,432.7 L271.1,430.0 L271.6,427.4 L272.1,425.3 L272.6,424.4 L273.1,425.1 L273.6,427.0 L274.1,429.5 L274.6,432.1 L275.1,434.5 L275.6,436.6 L276.1,438.2 L276.6,439.4 L277.1,440.4 L277.6,441.2 L278.1,441.9 L278.6,442.5 L279.1,443.1 L279.6,443.7 L280.1,444.2 L280.6,444.6 L281.1,444.8 L281.6,444.6 L282.1,444.0 L282.6,443.2 L283.1,442.3 L283.6,441.5 L284.1,440.8 L284.6,440.3 L285.1,439.9 L285.6,439.8 L286.1,439.7 L286.6,439.6 L287.1,439.6 L287.6,439.6 L288.1,439.6 L288.6,439.6 L289.1,439.6 L289.6,439.6 L290.1,439.6 L290.6,439.6 L291.1,439.6 L291.6,439.6 L292.1,439.6 L292.6,439.6 L293.1,439.6 L293.6,439.6 L294.1,439.4 L294.6,439.0 L295.1,437.9 L295.6,436.2 L296.1,434.1 L296.6,432.1 L297.1,430.5 L297.6,429.3 L298.1,428.6 L298.6,428.1 L299.1,427.9 L299.6,428.1 L300.1,428.6 L300.6,429.1 L301.1,429.7 L301.6,430.4 L302.1,431.3 L302.6,432.2 L303.1,433.3 L303.6,434.5 L304.1,435.7 L304.6,437.0 L305.1,438.4 L305.6,439.9 L306.1,441.4 L306.6,442.7 L307.1,443.9 L307.6,444.5 L308.1,444.5 L308.6,444.0 L309.1,443.4 L309.6,442.7 L310.1,442.1 L310.6,441.4 L311.1,440.8 L311.6,440.5 L312.1,440.5 L312.6,440.9 L313.1,441.6 L313.6,442.4 L314.1,443.2 L314.6,443.9 L315.1,444.4 L315.6,444.4 L316.1,443.8 L316.6,442.7 L317.1,441.4 L317.6,440.0 L318.1,438.6 L318.6,437.3 L319.1,436.1 L319.6,435.1 L320.1,434.3 L320.6,433.6 L321.1,432.7 L321.6,431.5 L322.1,430.0 L322.6,428.3 L323.1,426.7 L323.6,425.1 L324.1,424.0 L324.6,423.8 L325.1,424.8 L325.6,426.7 L326.1,429.1 L326.6,431.7 L327.1,434.2 L327.6,436.7 L328.1,439.1 L328.6,441.3 L329.1,443.0 L329.6,443.9 L330.1,443.8 L330.6,443.2 L331.1,442.3 L331.6,441.4 L332.1,440.6 L332.6,440.0 L333.1,439.7 L333.6,439.6 L334.1,439.6 L334.6,439.6 L335.1,439.6 L335.6,439.6 L336.1,439.6 L336.6,439.6 L337.1,439.6 L337.6,439.6 L338.1,439.6 L338.6,439.5 L339.1,439.3 L339.6,438.8 L340.1,438.0 L340.6,437.0 L341.1,436.0 L341.6,434.9 L342.1,433.8 L342.6,432.5 L343.1,431.2 L343.6,429.8 L344.1,428.4 L344.6,427.0 L345.1,425.6 L345.6,424.3 L346.1,423.5 L346.6,423.6 L347.1,424.6 L347.6,426.3 L348.1,428.3 L348.6,430.3 L349.1,432.2 L349.6,433.9 L350.1,435.4 L350.6,436.7 L351.1,438.0 L351.6,439.1 L352.1,440.2 L352.6,441.1 L353.1,442.0 L353.6,442.8 L354.1,443.6 L354.6,444.3 L355.1,444.7 L355.6,444.6 L356.1,444.1 L356.6,443.4 L357.1,442.6 L357.6,441.8 L358.1,441.1 L358.6,440.3 L359.1,439.6 L359.6,439.0 L360.1,438.4 L360.6,437.8 L361.1,437.2 L361.6,436.6 L362.1,436.0 L362.6,435.2 L363.1,434.3 L363.6,433.4 L364.1,432.4 L364.6,431.3 L365.1,430.2 L365.6,429.0 L366.1,427.7 L366.6,426.4 L367.1,425.2 L367.6,424.0 L368.1,423.3 L368.6,423.2 L369.1,423.9 L369.6,425.2 L370.1,426.8 L370.6,428.3 L371.1,429.8 L371.6,431.0 L372.1,432.0 L372.6,432.9 L373.1,433.8 L373.6,434.7 L374.1,435.6 L374.6,436.5 L375.1,437.4 L375.6,438.3 L376.1,438.9 L376.6,439.3 L377.1,439.5 L377.6,439.6 L378.1,439.6 L378.6,439.6 L379.1,439.6 L379.6,439.6 L380.1,439.6 L380.6,439.6 L381.1,439.6 L381.6,439.6 L382.1,439.6 L382.6,439.6 L383.1,439.6 L383.6,439.6 L384.1,439.6 L384.6,439.6 L385.1,439.6 L385.6,439.5 L386.1,439.3 L386.6,438.6 L387.1,437.1 L387.6,434.9 L388.1,432.4 L388.6,429.9 L389.1,427.5 L389.6,425.5 L390.1,424.0 L390.6,423.3 L391.1,423.5 L391.6,424.3 L392.1,425.2 L392.6,426.1 L393.1,426.8 L393.6,427.3 L394.1,428.0 L394.6,428.8 L395.1,430.0 L395.6,431.6 L396.1,433.6 L396.6,435.6 L397.1,437.3 L397.6,438.6 L398.1,439.3 L398.6,439.5 L399.1,439.6 L399.6,439.6 L400.1,439.6 L400.6,439.6 L401.1,439.6 L401.6,439.6 L402.1,439.6 L402.6,439.6 L403.1,439.6 L403.6,439.6 L404.1,439.6 L404.6,439.6 L405.1,439.6 L405.6,439.6 L406.1,439.6 L406.6,439.6 L407.1,439.6 L407.6,439.4 L408.1,438.9 L408.6,437.7 L409.1,435.8 L409.6,433.3 L410.1,430.7 L410.6,428.1 L411.1,426.0 L411.6,424.6 L412.1,424.4 L412.6,425.6 L413.1,427.6 L413.6,430.0 L414.1,432.4 L414.6,434.7 L415.1,436.8 L415.6,438.3 L416.1,439.2 L416.6,439.5 L417.1,439.6 L417.6,439.6 L418.1,439.6 L418.6,439.6 L419.1,439.6 L419.6,439.6 L420.1,439.6 L420.6,439.6 L421.1,439.6 L421.6,439.6 L422.1,439.6 L422.6,439.6 L423.1,439.6 L423.6,439.6 L424.1,439.6 L424.6,439.6 L425.1,439.6 L425.6,439.6 L426.1,439.6 L426.6,439.6 L427.1,439.6 L427.6,439.5 L428.1,439.3 L428.6,438.6 L429.1,437.4 L429.6,435.6 L430.1,433.4 L430.6,431.0 L431.1,428.4 L431.6,425.7 L432.1,423.0 L432.6,420.6 L433.1,418.8 L433.6,418.2 L434.1,419.1 L434.6,421.0 L435.1,423.4 L435.6,425.9 L436.1,428.3 L436.6,430.4 L437.1,432.0 L437.6,433.1 L438.1,433.9 L438.6,434.6 L439.1,435.2 L439.6,435.8 L440.1,436.6 L440.6,437.3 L441.1,438.1 L441.6,438.8 L442.1,439.3 L442.6,439.5 L443.1,439.5 L443.6,439.5 L444.1,439.1 L444.6,438.3 L445.1,437.2 L445.6,435.8 L446.1,434.2 L446.6,432.6 L447.1,431.0 L447.6,429.5 L448.1,427.9 L448.6,426.4 L449.1,425.0 L449.6,423.8 L450.1,422.9 L450.6,422.1 L451.1,421.4 L451.6,420.7 L452.1,420.0 L452.6,419.3 L453.1,418.5 L453.6,417.8 L454.1,417.1 L454.6,416.5 L455.1,416.0 L455.6,415.8 L456.1,416.0 L456.6,416.6 L457.1,417.4 L457.6,418.1 L458.1,418.9 L458.6,419.7 L459.1,420.5 L459.6,421.5 L460.1,422.6 L460.6,423.9 L461.1,425.4 L461.6,427.0 L462.1,428.5 L462.6,430.1 L463.1,431.6 L463.6,432.9 L464.1,434.1 L464.6,435.0 L465.1,435.8 L465.6,436.6 L466.1,437.4 L466.6,438.1 L467.1,438.8 L467.6,439.2 L468.1,439.5 L468.6,439.6 L469.1,439.6 L469.6,439.6 L470.1,439.6 L470.6,439.6 L471.1,439.6 L471.6,439.6 L472.1,439.4 L472.6,439.1 L473.1,438.7 L473.6,438.1 L474.1,437.4 L474.6,436.7 L475.1,436.0 L475.6,435.1 L476.1,434.1 L476.6,432.7 L477.1,431.1 L477.6,429.3 L478.1,427.4 L478.6,425.4 L479.1,423.2 L479.6,420.8 L480.1,418.1 L480.6,415.4 L481.1,413.6 L481.6,413.4 L482.1,415.1 L482.6,418.1 L483.1,421.8 L483.6,425.4 L484.1,428.5 L484.6,430.9 L485.1,432.3 L485.6,433.3 L486.1,433.9 L486.6,434.5 L487.1,435.2 L487.6,435.9 L488.1,436.6 L488.6,437.4 L489.1,438.1 L489.6,438.8 L490.1,439.2 L490.6,439.5 L491.1,439.6 L491.6,439.6 L492.1,439.6 L492.6,439.6 L493.1,439.6 L493.6,439.6 L494.1,439.5 L494.6,439.1 L495.1,438.3 L495.6,437.0 L496.1,435.3 L496.6,433.5 L497.1,431.7 L497.6,430.2 L498.1,429.0 L498.6,428.4 L499.1,428.3 L499.6,428.7 L500.1,429.3 L500.6,430.0 L501.1,430.7 L501.6,431.4 L502.1,432.0 L502.6,432.6 L503.1,433.1 L503.6,433.6 L504.1,434.3 L504.6,435.0 L505.1,435.9 L505.6,436.9 L506.1,437.7 L506.6,438.3 L507.1,438.2 L507.6,437.6 L508.1,436.6 L508.6,435.4 L509.1,434.2 L509.6,432.9 L510.1,431.7 L510.6,430.5 L511.1,429.5 L511.6,428.9 L512.1,429.0 L512.6,429.9 L513.1,431.3 L513.6,432.9 L514.1,434.6 L514.6,436.2 L515.1,437.5 L515.6,438.4 L516.1,438.6 L516.6,438.3 L517.1,437.8 L517.6,437.3 L518.1,436.7 L518.6,436.1 L519.1,435.5 L519.6,435.0 L520.1,434.6 L520.6,434.7 L521.1,435.2 L521.6,436.2 L522.1,437.2 L522.6,438.2 L523.1,439.0 L523.6,439.4 L524.1,439.6 L524.6,439.6 L525.1,439.6 L525.6,439.6 L526.1,439.6 L526.6,439.6 L527.1,439.6 L527.6,439.6 L528.1,439.6 L528.6,439.6 L529.1,439.4 L529.6,439.0 L530.1,438.0 L530.6,436.5 L531.1,434.7 L531.6,433.1 L532.1,431.7 L532.6,430.5 L533.1,429.5 L533.6,428.8 L534.1,428.5 L534.6,428.8 L535.1,429.4 L535.6,430.1 L536.1,430.9 L536.6,431.6 L537.1,432.4 L537.6,433.2 L538.1,434.0 L538.6,434.8 L539.1,435.6 L539.6,436.5 L540.1,437.3 L540.6,438.0 L541.1,438.5 L541.6,438.5 L542.1,438.0 L542.6,437.1 L543.1,436.1 L543.6,435.0 L544.1,433.9 L544.6,432.8 L545.1,431.7 L545.6,430.6 L546.1,429.6 L546.6,428.8 L547.1,428.5 L547.6,428.7 L548.1,429.3 L548.6,430.0 L549.1,430.8 L549.6,431.5 L550.1,432.2 L550.6,432.7 L551.1,433.0 L551.6,433.1 L552.1,433.2 L552.6,433.3 L553.1,433.4 L553.6,433.4 L554.1,433.4 L554.6,433.3 L555.1,432.9 L555.6,432.5 L556.1,431.9 L556.6,431.3 L557.1,430.8 L557.6,430.2 L558.1,429.7 L558.6,429.2 L559.1,428.8 L559.6,428.8 L560.1,429.4 L560.6,430.5 L561.1,431.9 L561.6,433.5 L562.1,435.0 L562.6,436.5 L563.1,437.7 L563.6,438.5 L564.1,438.9 L564.6,439.0 L565.1,439.1 L565.6,439.2 L566.1,439.3 L566.6,439.3 L567.1,439.4 L567.6,439.5 L568.1,439.5 L568.6,439.4 L569.1,439.1 L569.6,438.8 L570.1,438.4 L570.6,438.0 L571.1,437.6 L571.6,437.2 L572.1,436.8 L572.6,436.4 L573.1,436.0 L573.6,435.6 L574.1,435.3 L574.6,435.0 L575.1,434.8 L575.6,434.5 L576.1,434.3 L576.6,434.1 L577.1,433.9 L577.5,445.6 L133.1,445.6 Z" fill="rgba(125,192,222,0.42)"/>
<path d="M133.1,416.5 L133.6,418.3 L134.1,420.7 L134.6,423.3 L135.1,426.1 L135.6,428.9 L136.1,431.6 L136.6,434.2 L137.1,436.5 L137.6,438.1 L138.1,438.8 L138.6,438.7 L139.1,438.1 L139.6,437.1 L140.1,436.1 L140.6,435.2 L141.1,434.5 L141.6,433.7 L142.1,433.0 L142.6,432.3 L143.1,431.6 L143.6,430.9 L144.1,430.2 L144.6,429.5 L145.1,428.8 L145.6,428.3 L146.1,427.9 L146.6,427.8 L147.1,428.1 L147.6,428.8 L148.1,429.6 L148.6,430.5 L149.1,431.4 L149.6,432.2 L150.1,432.9 L150.6,433.4 L151.1,433.6 L151.6,433.7 L152.1,433.7 L152.6,433.7 L153.1,433.7 L153.6,433.7 L154.1,433.7 L154.6,433.8 L155.1,433.8 L155.6,433.9 L156.1,434.1 L156.6,434.7 L157.1,435.4 L157.6,436.3 L158.1,437.2 L158.6,438.0 L159.1,438.6 L159.6,438.8 L160.1,438.6 L160.6,438.2 L161.1,437.6 L161.6,437.0 L162.1,436.4 L162.6,435.7 L163.1,435.0 L163.6,434.2 L164.1,433.4 L164.6,432.6 L165.1,431.7 L165.6,430.7 L166.1,429.5 L166.6,428.2 L167.1,426.9 L167.6,425.6 L168.1,424.7 L168.6,424.4 L169.1,424.7 L169.6,425.5 L170.1,426.5 L170.6,427.4 L171.1,428.0 L171.6,428.2 L172.1,428.0 L172.6,428.0 L173.1,428.3 L173.6,429.3 L174.1,430.6 L174.6,432.2 L175.1,433.8 L175.6,435.3 L176.1,436.7 L176.6,437.8 L177.1,438.7 L177.6,439.2 L178.1,439.5 L178.6,439.6 L179.1,439.6 L179.6,439.6 L180.1,439.6 L180.6,439.6 L181.1,439.6 L181.6,439.6 L182.1,439.6 L182.6,439.6 L183.1,439.6 L183.6,439.6 L184.1,439.6 L184.6,439.5 L185.1,439.4 L185.6,438.9 L186.1,438.1 L186.6,436.9 L187.1,435.6 L187.6,434.3 L188.1,433.0 L188.6,431.7 L189.1,430.5 L189.6,429.5 L190.1,429.0 L190.6,429.1 L191.1,429.5 L191.6,430.1 L192.1,430.8 L192.6,431.5 L193.1,432.1 L193.6,432.8 L194.1,433.5 L194.6,434.2 L195.1,434.9 L195.6,435.6 L196.1,436.4 L196.6,437.1 L197.1,437.9 L197.6,438.6 L198.1,439.1 L198.6,439.4 L199.1,439.6 L199.6,439.6 L200.1,439.6 L200.6,439.6 L201.1,439.6 L201.6,439.6 L202.1,439.6 L202.6,439.6 L203.1,439.6 L203.6,439.6 L204.1,439.6 L204.6,439.6 L205.1,439.6 L205.6,439.6 L206.1,439.6 L206.6,439.5 L207.1,439.0 L207.6,438.1 L208.1,436.6 L208.6,434.7 L209.1,432.7 L209.6,430.6 L210.1,428.6 L210.6,426.9 L211.1,425.6 L211.6,425.2 L212.1,425.9 L212.6,427.3 L213.1,429.1 L213.6,431.0 L214.1,433.0 L214.6,435.0 L215.1,436.9 L215.6,438.4 L216.1,439.2 L216.6,439.5 L217.1,439.6 L217.6,439.6 L218.1,439.6 L218.6,439.6 L219.1,439.6 L219.6,439.6 L220.1,439.6 L220.6,439.5 L221.1,439.2 L221.6,438.8 L222.1,438.1 L222.6,437.3 L223.1,436.5 L223.6,435.7 L224.1,435.1 L224.6,434.9 L225.1,435.1 L225.6,435.7 L226.1,436.4 L226.6,437.2 L227.1,438.0 L227.6,438.7 L228.1,439.2 L228.6,439.4 L229.1,439.5 L229.6,439.2 L230.1,438.4 L230.6,437.2 L231.1,435.6 L231.6,433.6 L232.1,431.3 L232.6,428.8 L233.1,426.6 L233.6,425.4 L234.1,425.4 L234.6,426.3 L235.1,427.6 L235.6,429.0 L236.1,430.2 L236.6,431.1 L237.1,431.9 L237.6,432.5 L238.1,433.1 L238.6,433.8 L239.1,434.7 L239.6,435.8 L240.1,436.9 L240.6,437.9 L241.1,438.8 L241.6,439.3 L242.1,439.5 L242.6,439.6 L243.1,439.6 L243.6,439.6 L244.1,439.6 L244.6,439.6 L245.1,439.6 L245.6,439.6 L246.1,439.6 L246.6,439.5 L247.1,439.2 L247.6,438.5 L248.1,437.3 L248.6,435.8 L249.1,434.1 L249.6,432.5 L250.1,431.2 L250.6,430.4 L251.1,430.4 L251.6,430.9 L252.1,431.6 L252.6,432.3 L253.1,432.8 L253.6,433.1 L254.1,433.5 L254.6,433.9 L255.1,434.5 L255.6,435.2 L256.1,436.0 L256.6,436.9 L257.1,437.8 L257.6,438.5 L258.1,439.1 L258.6,439.4 L259.1,439.6 L259.6,439.6 L260.1,439.6 L260.6,439.6 L261.1,439.6 L261.6,439.6 L262.1,439.6 L262.6,439.6 L263.1,439.6 L263.6,439.6 L264.1,439.6 L264.6,439.6 L265.1,439.6 L265.6,439.6 L266.1,439.6 L266.6,439.6 L267.1,439.6 L267.6,439.6 L268.1,439.6 L268.6,439.4 L269.1,438.8 L269.6,437.6 L270.1,435.7 L270.6,433.3 L271.1,430.8 L271.6,428.4 L272.1,426.5 L272.6,425.7 L273.1,426.3 L273.6,428.0 L274.1,430.3 L274.6,432.6 L275.1,434.8 L275.6,436.7 L276.1,438.2 L276.6,439.4 L277.1,440.4 L277.6,441.2 L278.1,441.9 L278.6,442.5 L279.1,443.1 L279.6,443.7 L280.1,444.2 L280.6,444.6 L281.1,444.8 L281.6,444.6 L282.1,444.0 L282.6,443.2 L283.1,442.3 L283.6,441.5 L284.1,440.8 L284.6,440.3 L285.1,439.9 L285.6,439.8 L286.1,439.7 L286.6,439.6 L287.1,439.6 L287.6,439.6 L288.1,439.6 L288.6,439.6 L289.1,439.6 L289.6,439.6 L290.1,439.6 L290.6,439.6 L291.1,439.6 L291.6,439.6 L292.1,439.6 L292.6,439.6 L293.1,439.6 L293.6,439.6 L294.1,439.5 L294.6,439.1 L295.1,438.3 L295.6,437.1 L296.1,435.4 L296.6,433.7 L297.1,432.2 L297.6,431.0 L298.1,430.0 L298.6,429.0 L299.1,428.2 L299.6,427.7 L300.1,427.4 L300.6,427.3 L301.1,427.4 L301.6,427.6 L302.1,428.2 L302.6,429.0 L303.1,430.1 L303.6,431.2 L304.1,432.6 L304.6,434.2 L305.1,436.0 L305.6,437.9 L306.1,439.9 L306.6,441.7 L307.1,443.2 L307.6,443.9 L308.1,443.7 L308.6,442.9 L309.1,441.8 L309.6,440.6 L310.1,439.4 L310.6,438.3 L311.1,437.1 L311.6,436.1 L312.1,435.5 L312.6,435.6 L313.1,436.5 L313.6,438.1 L314.1,439.9 L314.6,441.7 L315.1,443.1 L315.6,443.9 L316.1,443.8 L316.6,443.0 L317.1,441.8 L317.6,440.5 L318.1,439.3 L318.6,438.1 L319.1,437.0 L319.6,436.1 L320.1,435.3 L320.6,434.6 L321.1,433.7 L321.6,432.5 L322.1,431.1 L322.6,429.6 L323.1,427.9 L323.6,426.4 L324.1,425.3 L324.6,425.1 L325.1,426.0 L325.6,427.7 L326.1,429.9 L326.6,432.1 L327.1,434.5 L327.6,436.8 L328.1,439.2 L328.6,441.4 L329.1,443.0 L329.6,443.9 L330.1,443.8 L330.6,443.2 L331.1,442.3 L331.6,441.4 L332.1,440.6 L332.6,440.0 L333.1,439.7 L333.6,439.6 L334.1,439.6 L334.6,439.6 L335.1,439.6 L335.6,439.6 L336.1,439.6 L336.6,439.6 L337.1,439.6 L337.6,439.6 L338.1,439.6 L338.6,439.5 L339.1,439.3 L339.6,438.8 L340.1,438.0 L340.6,437.0 L341.1,436.0 L341.6,434.8 L342.1,433.6 L342.6,432.0 L343.1,430.1 L343.6,428.0 L344.1,425.8 L344.6,423.6 L345.1,421.4 L345.6,419.4 L346.1,418.1 L346.6,418.2 L347.1,419.7 L347.6,422.3 L348.1,425.3 L348.6,428.4 L349.1,431.2 L349.6,433.5 L350.1,435.3 L350.6,436.7 L351.1,438.0 L351.6,439.1 L352.1,440.2 L352.6,441.1 L353.1,442.0 L353.6,442.8 L354.1,443.6 L354.6,444.3 L355.1,444.7 L355.6,444.6 L356.1,444.1 L356.6,443.4 L357.1,442.6 L357.6,441.9 L358.1,441.1 L358.6,440.4 L359.1,439.8 L359.6,439.4 L360.1,438.9 L360.6,438.5 L361.1,438.1 L361.6,437.7 L362.1,437.2 L362.6,436.5 L363.1,435.7 L363.6,434.8 L364.1,433.8 L364.6,432.7 L365.1,431.6 L365.6,430.4 L366.1,429.2 L366.6,427.9 L367.1,426.6 L367.6,425.5 L368.1,424.7 L368.6,424.5 L369.1,425.1 L369.6,426.1 L370.1,427.4 L370.6,428.7 L371.1,429.7 L371.6,430.5 L372.1,431.1 L372.6,431.4 L373.1,431.8 L373.6,432.1 L374.1,432.4 L374.6,432.7 L375.1,433.0 L375.6,433.5 L376.1,434.0 L376.6,434.8 L377.1,435.8 L377.6,436.9 L378.1,437.9 L378.6,438.8 L379.1,439.3 L379.6,439.5 L380.1,439.6 L380.6,439.6 L381.1,439.6 L381.6,439.6 L382.1,439.6 L382.6,439.6 L383.1,439.6 L383.6,439.6 L384.1,439.6 L384.6,439.6 L385.1,439.6 L385.6,439.6 L386.1,439.5 L386.6,439.1 L387.1,438.4 L387.6,437.2 L388.1,435.8 L388.6,434.2 L389.1,432.6 L389.6,430.9 L390.1,429.2 L390.6,427.7 L391.1,426.4 L391.6,425.4 L392.1,424.6 L392.6,423.9 L393.1,423.3 L393.6,422.8 L394.1,422.6 L394.6,423.1 L395.1,424.2 L395.6,425.6 L396.1,427.3 L396.6,429.1 L397.1,431.1 L397.6,433.5 L398.1,435.9 L398.6,437.9 L399.1,439.0 L399.6,439.5 L400.1,439.6 L400.6,439.6 L401.1,439.6 L401.6,439.6 L402.1,439.6 L402.6,439.6 L403.1,439.5 L403.6,439.3 L404.1,438.9 L404.6,438.3 L405.1,437.6 L405.6,436.9 L406.1,436.2 L406.6,435.5 L407.1,434.9 L407.6,434.1 L408.1,433.3 L408.6,432.3 L409.1,431.1 L409.6,429.7 L410.1,428.3 L410.6,426.9 L411.1,425.7 L411.6,425.1 L412.1,425.3 L412.6,426.6 L413.1,428.5 L413.6,430.6 L414.1,432.9 L414.6,435.0 L415.1,437.0 L415.6,438.4 L416.1,439.2 L416.6,439.5 L417.1,439.6 L417.6,439.6 L418.1,439.6 L418.6,439.6 L419.1,439.6 L419.6,439.6 L420.1,439.6 L420.6,439.6 L421.1,439.6 L421.6,439.6 L422.1,439.6 L422.6,439.6 L423.1,439.6 L423.6,439.6 L424.1,439.6 L424.6,439.6 L425.1,439.6 L425.6,439.6 L426.1,439.5 L426.6,439.4 L427.1,439.0 L427.6,438.3 L428.1,437.4 L428.6,436.5 L429.1,435.4 L429.6,434.2 L430.1,432.9 L430.6,431.3 L431.1,429.4 L431.6,427.1 L432.1,424.8 L432.6,422.6 L433.1,421.1 L433.6,420.5 L434.1,421.2 L434.6,422.8 L435.1,424.8 L435.6,426.9 L436.1,429.0 L436.6,430.8 L437.1,432.2 L437.6,433.3 L438.1,434.2 L438.6,435.0 L439.1,435.7 L439.6,436.4 L440.1,437.1 L440.6,437.8 L441.1,438.4 L441.6,439.0 L442.1,439.3 L442.6,439.5 L443.1,439.6 L443.6,439.5 L444.1,439.2 L444.6,438.7 L445.1,437.9 L445.6,436.8 L446.1,435.5 L446.6,434.2 L447.1,432.8 L447.6,431.3 L448.1,429.8 L448.6,428.4 L449.1,427.1 L449.6,425.9 L450.1,425.0 L450.6,424.1 L451.1,423.2 L451.6,422.4 L452.1,421.4 L452.6,420.1 L453.1,418.6 L453.6,416.9 L454.1,415.0 L454.6,413.3 L455.1,411.8 L455.6,411.2 L456.1,411.4 L456.6,412.4 L457.1,413.7 L457.6,415.1 L458.1,416.5 L458.6,417.9 L459.1,419.4 L459.6,420.8 L460.1,422.3 L460.6,423.8 L461.1,425.4 L461.6,427.0 L462.1,428.5 L462.6,430.1 L463.1,431.6 L463.6,432.9 L464.1,434.1 L464.6,435.0 L465.1,435.8 L465.6,436.6 L466.1,437.4 L466.6,438.1 L467.1,438.8 L467.6,439.2 L468.1,439.5 L468.6,439.6 L469.1,439.6 L469.6,439.6 L470.1,439.6 L470.6,439.6 L471.1,439.6 L471.6,439.6 L472.1,439.5 L472.6,439.3 L473.1,439.0 L473.6,438.5 L474.1,438.1 L474.6,437.6 L475.1,437.1 L475.6,436.5 L476.1,435.6 L476.6,434.4 L477.1,432.9 L477.6,431.3 L478.1,429.5 L478.6,427.7 L479.1,425.6 L479.6,423.2 L480.1,420.6 L480.6,418.0 L481.1,416.1 L481.6,415.8 L482.1,417.3 L482.6,420.2 L483.1,423.6 L483.6,426.9 L484.1,429.8 L484.6,432.0 L485.1,433.3 L485.6,434.1 L486.1,434.6 L486.6,435.1 L487.1,435.7 L487.6,436.3 L488.1,436.9 L488.6,437.6 L489.1,438.3 L489.6,438.8 L490.1,439.3 L490.6,439.5 L491.1,439.6 L491.6,439.6 L492.1,439.6 L492.6,439.6 L493.1,439.6 L493.6,439.6 L494.1,439.5 L494.6,439.3 L495.1,438.7 L495.6,437.8 L496.1,436.7 L496.6,435.4 L497.1,434.2 L497.6,433.1 L498.1,432.1 L498.6,431.3 L499.1,430.5 L499.6,429.8 L500.1,429.1 L500.6,428.6 L501.1,428.3 L501.6,428.0 L502.1,427.8 L502.6,427.9 L503.1,428.3 L503.6,429.0 L504.1,429.8 L504.6,430.9 L505.1,432.3 L505.6,433.7 L506.1,435.2 L506.6,436.6 L507.1,437.7 L507.6,438.1 L508.1,437.7 L508.6,436.9 L509.1,435.7 L509.6,434.5 L510.1,433.3 L510.6,432.2 L511.1,431.2 L511.6,430.6 L512.1,430.6 L512.6,431.3 L513.1,432.5 L513.6,433.9 L514.1,435.3 L514.6,436.7 L515.1,437.9 L515.6,438.7 L516.1,439.0 L516.6,439.0 L517.1,438.8 L517.6,438.6 L518.1,438.3 L518.6,438.0 L519.1,437.8 L519.6,437.5 L520.1,437.2 L520.6,436.9 L521.1,436.5 L521.6,436.1 L522.1,435.7 L522.6,435.3 L523.1,434.9 L523.6,434.6 L524.1,434.4 L524.6,434.7 L525.1,435.2 L525.6,436.0 L526.1,437.0 L526.6,437.8 L527.1,438.6 L527.6,439.2 L528.1,439.5 L528.6,439.6 L529.1,439.5 L529.6,439.3 L530.1,438.9 L530.6,438.1 L531.1,437.1 L531.6,436.1 L532.1,435.0 L532.6,434.0 L533.1,433.2 L533.6,432.5 L534.1,431.9 L534.6,431.4 L535.1,430.9 L535.6,430.4 L536.1,429.9 L536.6,429.4 L537.1,428.9 L537.6,428.7 L538.1,428.9 L538.6,429.8 L539.1,431.1 L539.6,432.8 L540.1,434.5 L540.6,436.2 L541.1,437.5 L541.6,438.1 L542.1,438.0 L542.6,437.4 L543.1,436.5 L543.6,435.6 L544.1,434.6 L544.6,433.6 L545.1,432.7 L545.6,431.7 L546.1,430.8 L546.6,430.2 L547.1,429.9 L547.6,430.1 L548.1,430.6 L548.6,431.3 L549.1,432.0 L549.6,432.7 L550.1,433.4 L550.6,434.0 L551.1,434.6 L551.6,435.1 L552.1,435.7 L552.6,436.2 L553.1,436.7 L553.6,437.2 L554.1,437.4 L554.6,437.2 L555.1,436.4 L555.6,435.1 L556.1,433.6 L556.6,432.0 L557.1,430.4 L557.6,428.8 L558.1,427.3 L558.6,425.8 L559.1,424.6 L559.6,424.1 L560.1,424.6 L560.6,426.2 L561.1,428.3 L561.6,430.7 L562.1,433.1 L562.6,435.3 L563.1,437.1 L563.6,438.3 L564.1,438.9 L564.6,439.1 L565.1,439.2 L565.6,439.3 L566.1,439.3 L566.6,439.4 L567.1,439.4 L567.6,439.5 L568.1,439.5 L568.6,439.4 L569.1,439.2 L569.6,439.0 L570.1,438.7 L570.6,438.4 L571.1,438.1 L571.6,437.8 L572.1,437.6 L572.6,437.3 L573.1,437.0 L573.6,436.7 L574.1,436.4 L574.6,436.2 L575.1,436.0 L575.6,435.8 L576.1,435.6 L576.6,435.4 L577.1,435.3" fill="none" stroke="#72d0ee" stroke-width="1.3"/>
<path d="M133.1,423.0 L133.6,424.2 L134.1,426.0 L134.6,427.9 L135.1,429.9 L135.6,431.8 L136.1,433.8 L136.6,435.7 L137.1,437.3 L137.6,438.4 L138.1,438.9 L138.6,438.6 L139.1,437.6 L139.6,436.2 L140.1,434.5 L140.6,432.7 L141.1,431.0 L141.6,429.5 L142.1,428.4 L142.6,427.7 L143.1,427.4 L143.6,427.3 L144.1,427.3 L144.6,427.3 L145.1,427.3 L145.6,427.3 L146.1,427.4 L146.6,427.6 L147.1,428.0 L147.6,428.7 L148.1,429.6 L148.6,430.5 L149.1,431.4 L149.6,432.2 L150.1,432.9 L150.6,433.4 L151.1,433.6 L151.6,433.7 L152.1,433.7 L152.6,433.7 L153.1,433.7 L153.6,433.7 L154.1,433.7 L154.6,433.8 L155.1,433.8 L155.6,433.9 L156.1,434.1 L156.6,434.7 L157.1,435.4 L157.6,436.3 L158.1,437.2 L158.6,438.0 L159.1,438.5 L159.6,438.7 L160.1,438.4 L160.6,437.8 L161.1,437.1 L161.6,436.3 L162.1,435.6 L162.6,434.9 L163.1,434.2 L163.6,433.4 L164.1,432.7 L164.6,432.0 L165.1,431.2 L165.6,430.1 L166.1,428.9 L166.6,427.4 L167.1,425.9 L167.6,424.5 L168.1,423.5 L168.6,423.3 L169.1,424.0 L169.6,425.2 L170.1,426.8 L170.6,428.3 L171.1,429.7 L171.6,430.8 L172.1,431.7 L172.6,432.5 L173.1,433.4 L173.6,434.3 L174.1,435.2 L174.6,436.2 L175.1,437.2 L175.6,438.1 L176.1,438.9 L176.6,439.3 L177.1,439.5 L177.6,439.6 L178.1,439.6 L178.6,439.6 L179.1,439.6 L179.6,439.6 L180.1,439.6 L180.6,439.6 L181.1,439.6 L181.6,439.6 L182.1,439.6 L182.6,439.6 L183.1,439.6 L183.6,439.6 L184.1,439.6 L184.6,439.5 L185.1,439.4 L185.6,438.9 L186.1,438.0 L186.6,436.7 L187.1,435.4 L187.6,434.0 L188.1,432.6 L188.6,431.2 L189.1,429.9 L189.6,428.9 L190.1,428.4 L190.6,428.5 L191.1,429.0 L191.6,429.7 L192.1,430.5 L192.6,431.2 L193.1,432.0 L193.6,432.7 L194.1,433.5 L194.6,434.2 L195.1,434.9 L195.6,435.6 L196.1,436.4 L196.6,437.1 L197.1,437.9 L197.6,438.6 L198.1,439.1 L198.6,439.4 L199.1,439.6 L199.6,439.6 L200.1,439.6 L200.6,439.6 L201.1,439.6 L201.6,439.6 L202.1,439.6 L202.6,439.6 L203.1,439.6 L203.6,439.6 L204.1,439.6 L204.6,439.6 L205.1,439.6 L205.6,439.6 L206.1,439.6 L206.6,439.4 L207.1,439.0 L207.6,438.1 L208.1,436.5 L208.6,434.4 L209.1,432.2 L209.6,430.0 L210.1,427.8 L210.6,425.8 L211.1,424.4 L211.6,423.9 L212.1,424.7 L212.6,426.3 L213.1,428.3 L213.6,430.4 L214.1,432.6 L214.6,434.8 L215.1,436.8 L215.6,438.3 L216.1,439.2 L216.6,439.5 L217.1,439.6 L217.6,439.6 L218.1,439.6 L218.6,439.6 L219.1,439.6 L219.6,439.6 L220.1,439.6 L220.6,439.5 L221.1,439.2 L221.6,438.7 L222.1,438.0 L222.6,437.1 L223.1,436.2 L223.6,435.4 L224.1,434.7 L224.6,434.4 L225.1,434.7 L225.6,435.3 L226.1,436.1 L226.6,437.0 L227.1,437.8 L227.6,438.6 L228.1,439.1 L228.6,439.4 L229.1,439.4 L229.6,439.1 L230.1,438.3 L230.6,436.9 L231.1,435.0 L231.6,432.8 L232.1,430.3 L232.6,427.6 L233.1,425.4 L233.6,424.5 L234.1,425.0 L234.6,426.6 L235.1,428.7 L235.6,430.9 L236.1,433.1 L236.6,435.3 L237.1,437.2 L237.6,438.5 L238.1,439.3 L238.6,439.5 L239.1,439.6 L239.6,439.6 L240.1,439.6 L240.6,439.6 L241.1,439.6 L241.6,439.6 L242.1,439.6 L242.6,439.6 L243.1,439.6 L243.6,439.6 L244.1,439.6 L244.6,439.6 L245.1,439.6 L245.6,439.6 L246.1,439.6 L246.6,439.5 L247.1,439.1 L247.6,438.3 L248.1,436.9 L248.6,435.2 L249.1,433.2 L249.6,431.4 L250.1,429.8 L250.6,429.0 L251.1,429.2 L251.6,430.1 L252.1,431.1 L252.6,432.0 L253.1,432.6 L253.6,433.0 L254.1,433.3 L254.6,433.7 L255.1,434.3 L255.6,435.0 L256.1,435.8 L256.6,436.8 L257.1,437.7 L257.6,438.5 L258.1,439.1 L258.6,439.4 L259.1,439.6 L259.6,439.6 L260.1,439.6 L260.6,439.6 L261.1,439.6 L261.6,439.6 L262.1,439.6 L262.6,439.6 L263.1,439.6 L263.6,439.6 L264.1,439.6 L264.6,439.6 L265.1,439.6 L265.6,439.6 L266.1,439.6 L266.6,439.6 L267.1,439.6 L267.6,439.6 L268.1,439.5 L268.6,439.3 L269.1,438.7 L269.6,437.4 L270.1,435.3 L270.6,432.7 L271.1,430.0 L271.6,427.4 L272.1,425.3 L272.6,424.4 L273.1,425.1 L273.6,427.0 L274.1,429.5 L274.6,432.1 L275.1,434.5 L275.6,436.6 L276.1,438.2 L276.6,439.4 L277.1,440.4 L277.6,441.2 L278.1,441.9 L278.6,442.5 L279.1,443.1 L279.6,443.7 L280.1,444.2 L280.6,444.6 L281.1,444.8 L281.6,444.6 L282.1,444.0 L282.6,443.2 L283.1,442.3 L283.6,441.5 L284.1,440.8 L284.6,440.3 L285.1,439.9 L285.6,439.8 L286.1,439.7 L286.6,439.6 L287.1,439.6 L287.6,439.6 L288.1,439.6 L288.6,439.6 L289.1,439.6 L289.6,439.6 L290.1,439.6 L290.6,439.6 L291.1,439.6 L291.6,439.6 L292.1,439.6 L292.6,439.6 L293.1,439.6 L293.6,439.6 L294.1,439.4 L294.6,439.0 L295.1,437.9 L295.6,436.2 L296.1,434.1 L296.6,432.1 L297.1,430.5 L297.6,429.3 L298.1,428.6 L298.6,428.1 L299.1,427.9 L299.6,428.1 L300.1,428.6 L300.6,429.1 L301.1,429.7 L301.6,430.4 L302.1,431.3 L302.6,432.2 L303.1,433.3 L303.6,434.5 L304.1,435.7 L304.6,437.0 L305.1,438.4 L305.6,439.9 L306.1,441.4 L306.6,442.7 L307.1,443.9 L307.6,444.5 L308.1,444.5 L308.6,444.0 L309.1,443.4 L309.6,442.7 L310.1,442.1 L310.6,441.4 L311.1,440.8 L311.6,440.5 L312.1,440.5 L312.6,440.9 L313.1,441.6 L313.6,442.4 L314.1,443.2 L314.6,443.9 L315.1,444.4 L315.6,444.4 L316.1,443.8 L316.6,442.7 L317.1,441.4 L317.6,440.0 L318.1,438.6 L318.6,437.3 L319.1,436.1 L319.6,435.1 L320.1,434.3 L320.6,433.6 L321.1,432.7 L321.6,431.5 L322.1,430.0 L322.6,428.3 L323.1,426.7 L323.6,425.1 L324.1,424.0 L324.6,423.8 L325.1,424.8 L325.6,426.7 L326.1,429.1 L326.6,431.7 L327.1,434.2 L327.6,436.7 L328.1,439.1 L328.6,441.3 L329.1,443.0 L329.6,443.9 L330.1,443.8 L330.6,443.2 L331.1,442.3 L331.6,441.4 L332.1,440.6 L332.6,440.0 L333.1,439.7 L333.6,439.6 L334.1,439.6 L334.6,439.6 L335.1,439.6 L335.6,439.6 L336.1,439.6 L336.6,439.6 L337.1,439.6 L337.6,439.6 L338.1,439.6 L338.6,439.5 L339.1,439.3 L339.6,438.8 L340.1,438.0 L340.6,437.0 L341.1,436.0 L341.6,434.9 L342.1,433.8 L342.6,432.5 L343.1,431.2 L343.6,429.8 L344.1,428.4 L344.6,427.0 L345.1,425.6 L345.6,424.3 L346.1,423.5 L346.6,423.6 L347.1,424.6 L347.6,426.3 L348.1,428.3 L348.6,430.3 L349.1,432.2 L349.6,433.9 L350.1,435.4 L350.6,436.7 L351.1,438.0 L351.6,439.1 L352.1,440.2 L352.6,441.1 L353.1,442.0 L353.6,442.8 L354.1,443.6 L354.6,444.3 L355.1,444.7 L355.6,444.6 L356.1,444.1 L356.6,443.4 L357.1,442.6 L357.6,441.8 L358.1,441.1 L358.6,440.3 L359.1,439.6 L359.6,439.0 L360.1,438.4 L360.6,437.8 L361.1,437.2 L361.6,436.6 L362.1,436.0 L362.6,435.2 L363.1,434.3 L363.6,433.4 L364.1,432.4 L364.6,431.3 L365.1,430.2 L365.6,429.0 L366.1,427.7 L366.6,426.4 L367.1,425.2 L367.6,424.0 L368.1,423.3 L368.6,423.2 L369.1,423.9 L369.6,425.2 L370.1,426.8 L370.6,428.3 L371.1,429.8 L371.6,431.0 L372.1,432.0 L372.6,432.9 L373.1,433.8 L373.6,434.7 L374.1,435.6 L374.6,436.5 L375.1,437.4 L375.6,438.3 L376.1,438.9 L376.6,439.3 L377.1,439.5 L377.6,439.6 L378.1,439.6 L378.6,439.6 L379.1,439.6 L379.6,439.6 L380.1,439.6 L380.6,439.6 L381.1,439.6 L381.6,439.6 L382.1,439.6 L382.6,439.6 L383.1,439.6 L383.6,439.6 L384.1,439.6 L384.6,439.6 L385.1,439.6 L385.6,439.5 L386.1,439.3 L386.6,438.6 L387.1,437.1 L387.6,434.9 L388.1,432.4 L388.6,429.9 L389.1,427.5 L389.6,425.5 L390.1,424.0 L390.6,423.3 L391.1,423.5 L391.6,424.3 L392.1,425.2 L392.6,426.1 L393.1,426.8 L393.6,427.3 L394.1,428.0 L394.6,428.8 L395.1,430.0 L395.6,431.6 L396.1,433.6 L396.6,435.6 L397.1,437.3 L397.6,438.6 L398.1,439.3 L398.6,439.5 L399.1,439.6 L399.6,439.6 L400.1,439.6 L400.6,439.6 L401.1,439.6 L401.6,439.6 L402.1,439.6 L402.6,439.6 L403.1,439.6 L403.6,439.6 L404.1,439.6 L404.6,439.6 L405.1,439.6 L405.6,439.6 L406.1,439.6 L406.6,439.6 L407.1,439.6 L407.6,439.4 L408.1,438.9 L408.6,437.7 L409.1,435.8 L409.6,433.3 L410.1,430.7 L410.6,428.1 L411.1,426.0 L411.6,424.6 L412.1,424.4 L412.6,425.6 L413.1,427.6 L413.6,430.0 L414.1,432.4 L414.6,434.7 L415.1,436.8 L415.6,438.3 L416.1,439.2 L416.6,439.5 L417.1,439.6 L417.6,439.6 L418.1,439.6 L418.6,439.6 L419.1,439.6 L419.6,439.6 L420.1,439.6 L420.6,439.6 L421.1,439.6 L421.6,439.6 L422.1,439.6 L422.6,439.6 L423.1,439.6 L423.6,439.6 L424.1,439.6 L424.6,439.6 L425.1,439.6 L425.6,439.6 L426.1,439.6 L426.6,439.6 L427.1,439.6 L427.6,439.5 L428.1,439.3 L428.6,438.6 L429.1,437.4 L429.6,435.6 L430.1,433.4 L430.6,431.0 L431.1,428.4 L431.6,425.7 L432.1,423.0 L432.6,420.6 L433.1,418.8 L433.6,418.2 L434.1,419.1 L434.6,421.0 L435.1,423.4 L435.6,425.9 L436.1,428.3 L436.6,430.4 L437.1,432.0 L437.6,433.1 L438.1,433.9 L438.6,434.6 L439.1,435.2 L439.6,435.8 L440.1,436.6 L440.6,437.3 L441.1,438.1 L441.6,438.8 L442.1,439.3 L442.6,439.5 L443.1,439.5 L443.6,439.5 L444.1,439.1 L444.6,438.3 L445.1,437.2 L445.6,435.8 L446.1,434.2 L446.6,432.6 L447.1,431.0 L447.6,429.5 L448.1,427.9 L448.6,426.4 L449.1,425.0 L449.6,423.8 L450.1,422.9 L450.6,422.1 L451.1,421.4 L451.6,420.7 L452.1,420.0 L452.6,419.3 L453.1,418.5 L453.6,417.8 L454.1,417.1 L454.6,416.5 L455.1,416.0 L455.6,415.8 L456.1,416.0 L456.6,416.6 L457.1,417.4 L457.6,418.1 L458.1,418.9 L458.6,419.7 L459.1,420.5 L459.6,421.5 L460.1,422.6 L460.6,423.9 L461.1,425.4 L461.6,427.0 L462.1,428.5 L462.6,430.1 L463.1,431.6 L463.6,432.9 L464.1,434.1 L464.6,435.0 L465.1,435.8 L465.6,436.6 L466.1,437.4 L466.6,438.1 L467.1,438.8 L467.6,439.2 L468.1,439.5 L468.6,439.6 L469.1,439.6 L469.6,439.6 L470.1,439.6 L470.6,439.6 L471.1,439.6 L471.6,439.6 L472.1,439.4 L472.6,439.1 L473.1,438.7 L473.6,438.1 L474.1,437.4 L474.6,436.7 L475.1,436.0 L475.6,435.1 L476.1,434.1 L476.6,432.7 L477.1,431.1 L477.6,429.3 L478.1,427.4 L478.6,425.4 L479.1,423.2 L479.6,420.8 L480.1,418.1 L480.6,415.4 L481.1,413.6 L481.6,413.4 L482.1,415.1 L482.6,418.1 L483.1,421.8 L483.6,425.4 L484.1,428.5 L484.6,430.9 L485.1,432.3 L485.6,433.3 L486.1,433.9 L486.6,434.5 L487.1,435.2 L487.6,435.9 L488.1,436.6 L488.6,437.4 L489.1,438.1 L489.6,438.8 L490.1,439.2 L490.6,439.5 L491.1,439.6 L491.6,439.6 L492.1,439.6 L492.6,439.6 L493.1,439.6 L493.6,439.6 L494.1,439.5 L494.6,439.1 L495.1,438.3 L495.6,437.0 L496.1,435.3 L496.6,433.5 L497.1,431.7 L497.6,430.2 L498.1,429.0 L498.6,428.4 L499.1,428.3 L499.6,428.7 L500.1,429.3 L500.6,430.0 L501.1,430.7 L501.6,431.4 L502.1,432.0 L502.6,432.6 L503.1,433.1 L503.6,433.6 L504.1,434.3 L504.6,435.0 L505.1,435.9 L505.6,436.9 L506.1,437.7 L506.6,438.3 L507.1,438.2 L507.6,437.6 L508.1,436.6 L508.6,435.4 L509.1,434.2 L509.6,432.9 L510.1,431.7 L510.6,430.5 L511.1,429.5 L511.6,428.9 L512.1,429.0 L512.6,429.9 L513.1,431.3 L513.6,432.9 L514.1,434.6 L514.6,436.2 L515.1,437.5 L515.6,438.4 L516.1,438.6 L516.6,438.3 L517.1,437.8 L517.6,437.3 L518.1,436.7 L518.6,436.1 L519.1,435.5 L519.6,435.0 L520.1,434.6 L520.6,434.7 L521.1,435.2 L521.6,436.2 L522.1,437.2 L522.6,438.2 L523.1,439.0 L523.6,439.4 L524.1,439.6 L524.6,439.6 L525.1,439.6 L525.6,439.6 L526.1,439.6 L526.6,439.6 L527.1,439.6 L527.6,439.6 L528.1,439.6 L528.6,439.6 L529.1,439.4 L529.6,439.0 L530.1,438.0 L530.6,436.5 L531.1,434.7 L531.6,433.1 L532.1,431.7 L532.6,430.5 L533.1,429.5 L533.6,428.8 L534.1,428.5 L534.6,428.8 L535.1,429.4 L535.6,430.1 L536.1,430.9 L536.6,431.6 L537.1,432.4 L537.6,433.2 L538.1,434.0 L538.6,434.8 L539.1,435.6 L539.6,436.5 L540.1,437.3 L540.6,438.0 L541.1,438.5 L541.6,438.5 L542.1,438.0 L542.6,437.1 L543.1,436.1 L543.6,435.0 L544.1,433.9 L544.6,432.8 L545.1,431.7 L545.6,430.6 L546.1,429.6 L546.6,428.8 L547.1,428.5 L547.6,428.7 L548.1,429.3 L548.6,430.0 L549.1,430.8 L549.6,431.5 L550.1,432.2 L550.6,432.7 L551.1,433.0 L551.6,433.1 L552.1,433.2 L552.6,433.3 L553.1,433.4 L553.6,433.4 L554.1,433.4 L554.6,433.3 L555.1,432.9 L555.6,432.5 L556.1,431.9 L556.6,431.3 L557.1,430.8 L557.6,430.2 L558.1,429.7 L558.6,429.2 L559.1,428.8 L559.6,428.8 L560.1,429.4 L560.6,430.5 L561.1,431.9 L561.6,433.5 L562.1,435.0 L562.6,436.5 L563.1,437.7 L563.6,438.5 L564.1,438.9 L564.6,439.0 L565.1,439.1 L565.6,439.2 L566.1,439.3 L566.6,439.3 L567.1,439.4 L567.6,439.5 L568.1,439.5 L568.6,439.4 L569.1,439.1 L569.6,438.8 L570.1,438.4 L570.6,438.0 L571.1,437.6 L571.6,437.2 L572.1,436.8 L572.6,436.4 L573.1,436.0 L573.6,435.6 L574.1,435.3 L574.6,435.0 L575.1,434.8 L575.6,434.5 L576.1,434.3 L576.6,434.1 L577.1,433.9" fill="none" stroke="#4699c3" stroke-width="1.35"/>
<path d="M173,26.6 L168.8,19.3 A5.1,5.1 0 1 1 177.2,19.3 Z" fill="#fff"/>
<circle cx="173" cy="16.4" r="2.5" fill="#161616"/>
<circle cx="173" cy="16.4" r="1.05" fill="#fff"/>
<path d="M580.5,7.5 L588.5,15.5 M588.5,7.5 L580.5,15.5" stroke="#e0e0e0" stroke-width="1.4"/>
</svg>
</body></html>
